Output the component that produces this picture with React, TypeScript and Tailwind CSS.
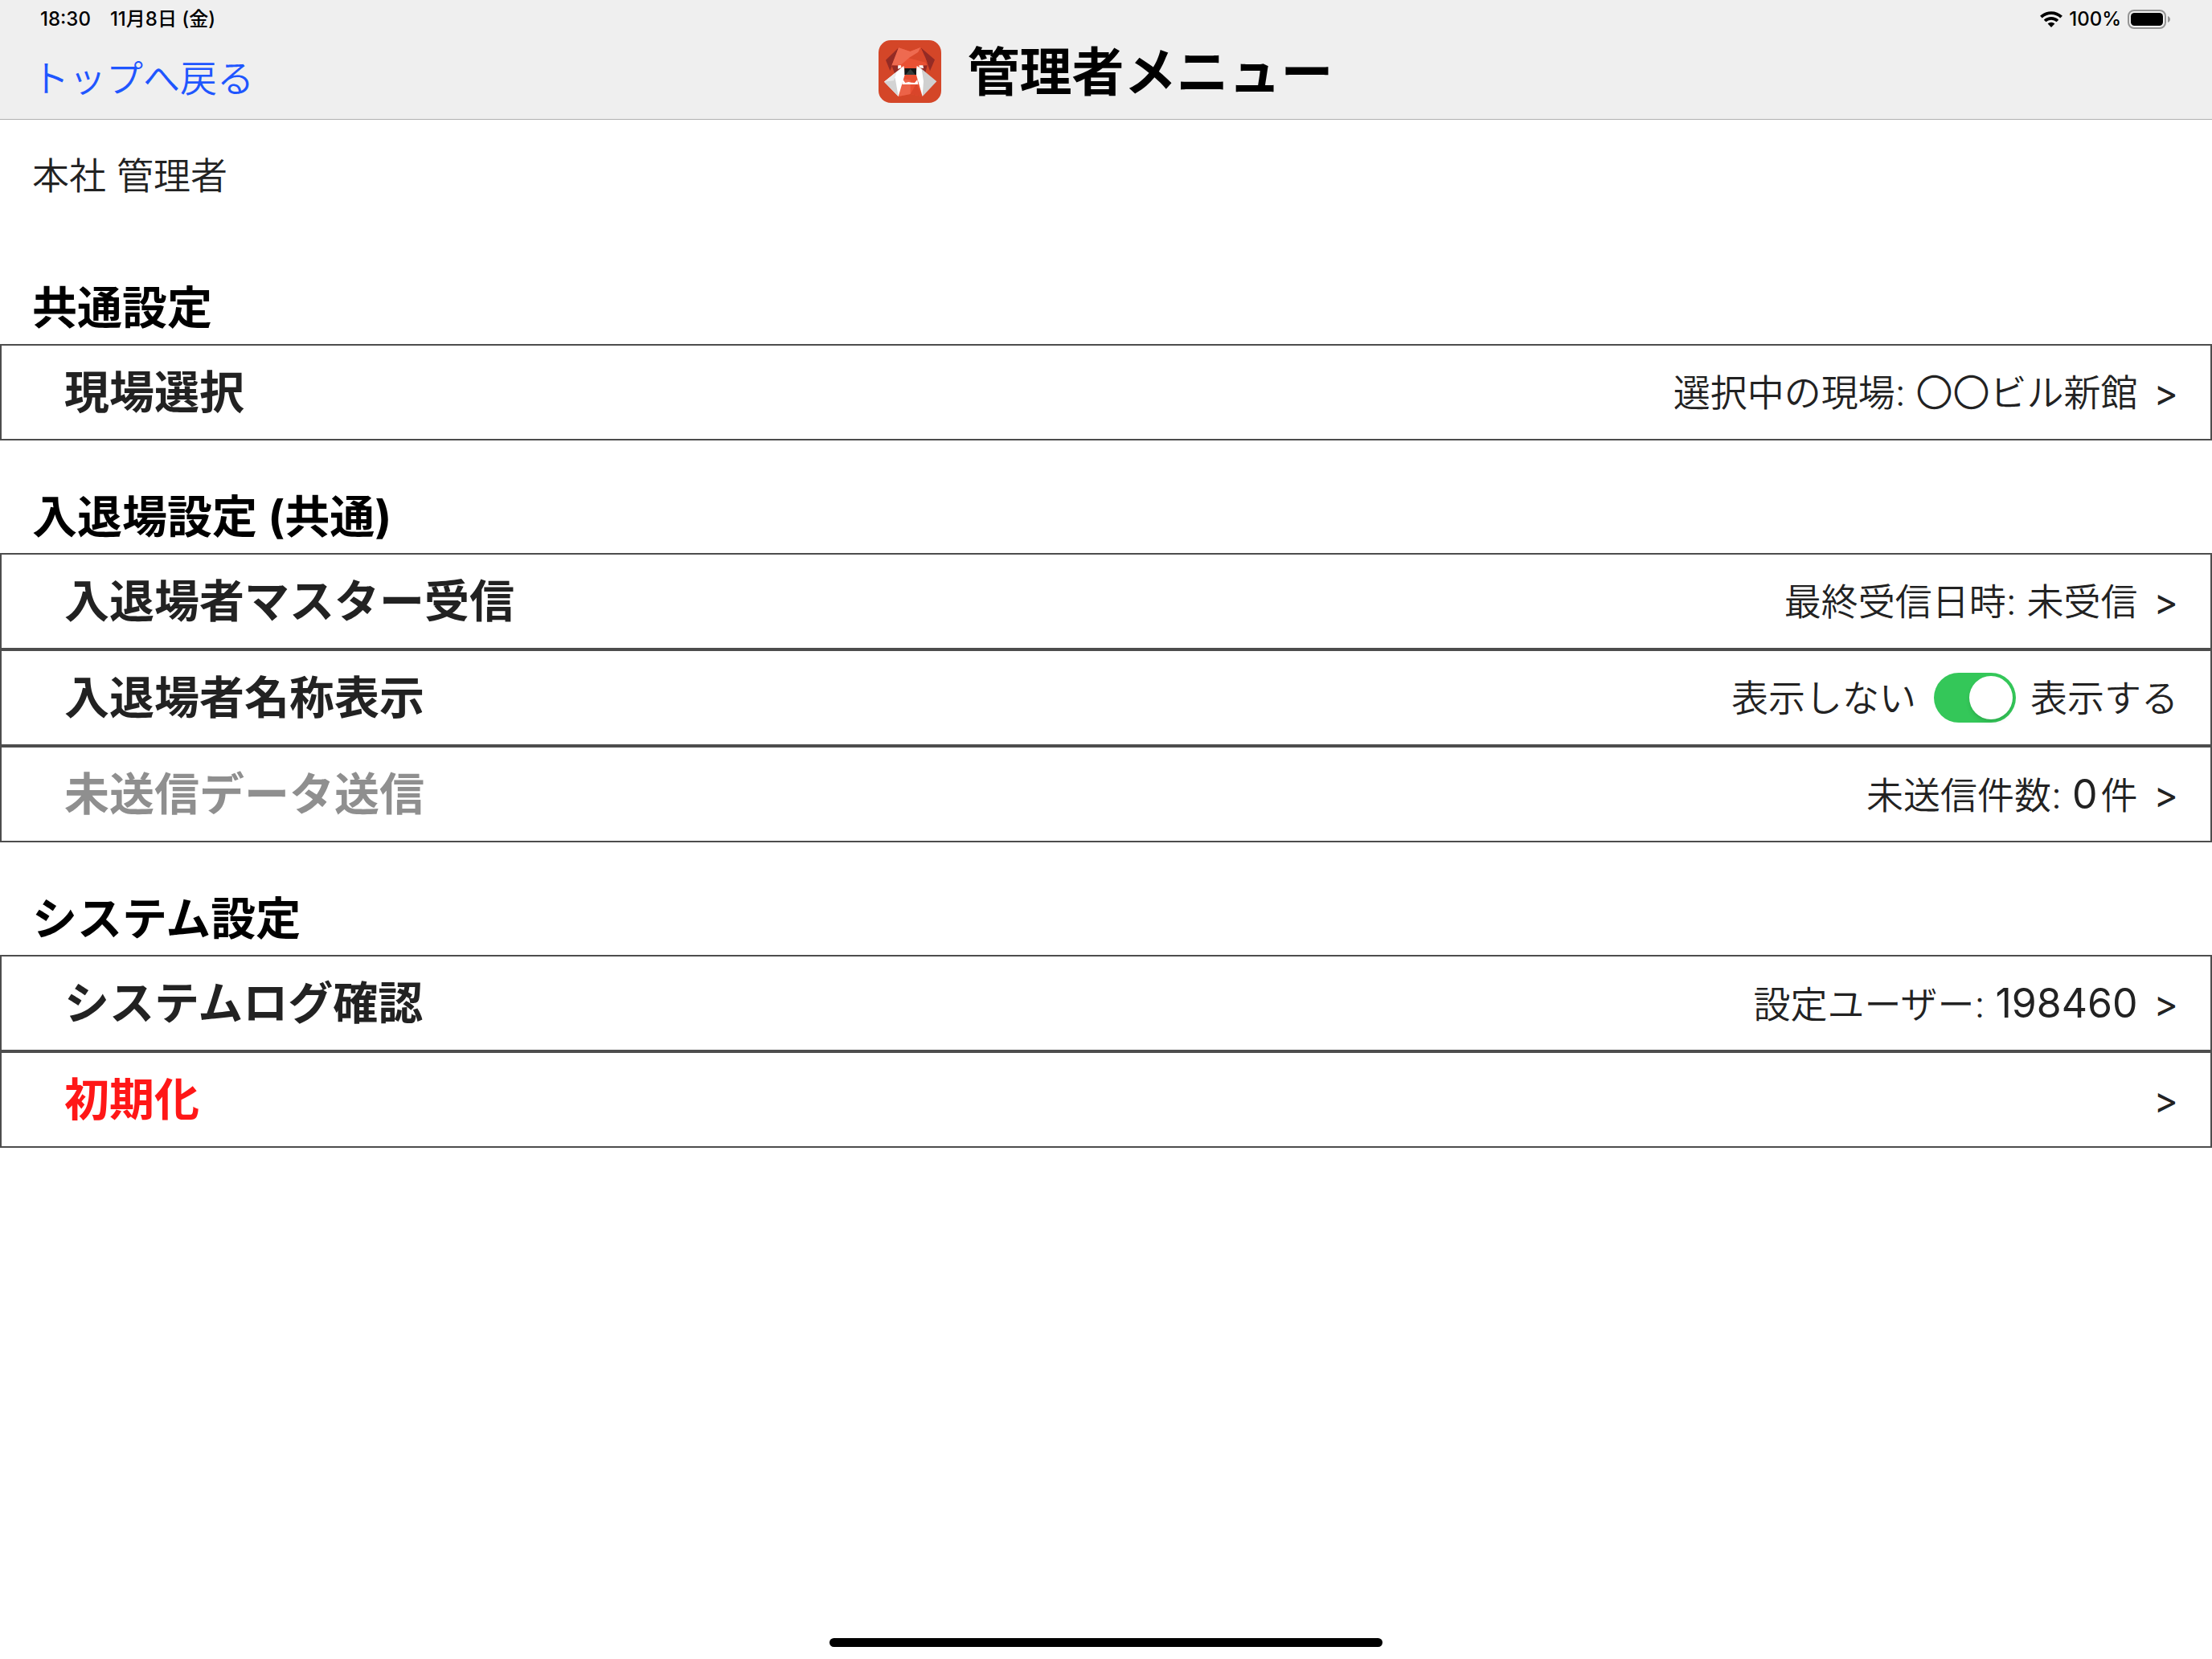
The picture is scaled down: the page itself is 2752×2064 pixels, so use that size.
import { useState, type ReactNode } from "react";

function AppIcon() {
  return (
    <svg viewBox="39 27 234 234" className="size-[78px] shrink-0" aria-hidden="true">
      <rect x="39" y="27" width="234" height="234" rx="46" fill="#d44628" />
      <path d="M114 55 66 101 82 141 104 88Z" fill="#942b25" />
      <path d="M196 54 249 100 231 142 214 92Z" fill="#942b25" />
      <path d="M114 55 157 69 196 54 220 122 190 150H125L88 122Z" fill="#e95134" />
      <path d="M114 55 157 69 196 54 187 72 152 94 124 118 88 122Z" fill="#ee6a50" />
      <path d="M196 54 221 112 152 94 187 72Z" fill="#d9482b" />
      <path d="M88 121 113 122 126 134 100 154Z" fill="#942b25" />
      <path d="M221 121 197 122 187 134 214 148Z" fill="#942b25" />
      <path d="M122 130 190 130 203 237 158 228 113 237Z" fill="#e94f32" />
      <path d="M128 170 158 176V228L113 237Z" fill="#ec6348" />
      <path d="M180 190 158 228 203 237Z" fill="#d9452a" />
      <path d="M112 121H123L124 130 111 134Z" fill="#fff" />
      <path d="M190 121H205L207 132 192 130Z" fill="#fff" />
      <path d="M133 123 60 182 113 237 138 152Z" fill="#fff" />
      <path d="M60 182 101 168 113 237Z" fill="#d3d3d3" />
      <path d="M60 182 108 144 96 178Z" fill="#e9e9e9" />
      <path d="M182 123 200 134 214 172 203 237 179 153Z" fill="#fff" />
      <path d="M200 134 256 181 203 237 207 180Z" fill="#d0d0d0" />
      <path d="M136 132H180V156H136Z" fill="#111617" />
      <path d="M158 134 176 156H140Z" fill="#343d3c" />
      <path d="M127 192 130 174 139 186 151 183 162 185 174 186 184 174 187 192Z" fill="#fff" />
    </svg>
  );
}

function WifiIcon() {
  return (
    <svg viewBox="0 0 28 20" className="h-5 w-7" aria-hidden="true">
      <g fill="none" stroke="#000" strokeWidth="3.8">
        <path d="M1.4 7.2a18 18 0 0 1 25.2 0" />
        <path d="M6.1 12a11.3 11.3 0 0 1 15.8 0" />
      </g>
      <path d="M9.6 15.6a6.3 6.3 0 0 1 8.8 0L14 20Z" fill="#000" />
    </svg>
  );
}

function BatteryIcon() {
  return (
    <svg viewBox="0 0 54 24" className="h-6 w-[54px]" aria-hidden="true">
      <rect x="1" y="1" width="46" height="22" rx="7" fill="none" stroke="#949494" strokeWidth="2" />
      <rect x="4" y="4" width="40" height="16" rx="4.5" fill="#000" />
      <path d="M50 8c4 1.600 4 6.400 0 8Z" fill="#949494" />
    </svg>
  );
}

function Section({ title, children }: { title: string; children: ReactNode }) {
  return (
    <section className="mb-12">
      <h2 className="flex h-[92px] items-center px-10 pt-0.5 text-[56px] leading-none font-bold text-black">
        {title}
      </h2>
      <div>{children}</div>
    </section>
  );
}

const rowClass =
  "flex h-[120px] w-full items-center justify-between border-2 border-[#4d4d4d] pr-10 pl-[78px] text-left text-[#222222]";

function Row({
  label,
  labelClass = "",
  disabled = false,
  children,
}: {
  label: string;
  labelClass?: string;
  disabled?: boolean;
  children?: ReactNode;
}) {
  return (
    <button type="button" disabled={disabled} className={rowClass}>
      <span className={`text-[56px] leading-none font-bold ${labelClass}`}>{label}</span>
      <span className="flex items-center gap-5 text-[46px] leading-none font-[350]">
        <span>{children}</span>
        <span className="font-normal">&gt;</span>
      </span>
    </button>
  );
}

export default function App() {
  const [showNames, setShowNames] = useState(true);

  return (
    <div
      lang="ja"
      className="flex min-h-screen flex-col bg-white font-['Inter','Noto_Sans_CJK_JP',sans-serif] text-[#222222]"
    >
      <header className="border-b border-[#b0b0b0] bg-[#efefef]">
        <div className="flex h-12 items-center justify-between pr-[51px] pl-[50px] text-2xl leading-none font-medium text-black">
          <div className="flex gap-6">
            <span>18:30</span>
            <span>11月8日 (金)</span>
          </div>
          <div className="flex items-center gap-2">
            <WifiIcon />
            <span>100%</span>
            <BatteryIcon />
          </div>
        </div>
        <div className="grid h-[100px] grid-cols-[1fr_auto_1fr] items-start px-10">
          <a href="#top" className="mt-[26px] text-[46px] leading-none font-[350] text-[#1f56ff]">
            トップへ戻る
          </a>
          <h1 className="flex items-center gap-8 text-[65px] leading-[80px] font-bold text-black">
            <AppIcon />
            <span className="pt-0.5">管理者メニュー</span>
          </h1>
        </div>
      </header>

      <main>
        <p className="flex h-[187px] items-start px-10 pt-[46px] text-[46px] leading-none font-[350]">本社 管理者</p>

        <Section title="共通設定">
          <Row label="現場選択">選択中の現場: 〇〇ビル新館</Row>
        </Section>

        <Section title="入退場設定 (共通)">
          <Row label="入退場者マスター受信">最終受信日時: 未受信</Row>
          <div className={rowClass}>
            <span id="names-label" className="text-[56px] leading-none font-bold">
              入退場者名称表示
            </span>
            <label className="flex items-center text-[46px] leading-none font-[350]">
              表示しない
              <input
                type="checkbox"
                role="switch"
                aria-labelledby="names-label"
                checked={showNames}
                onChange={(e) => setShowNames(e.target.checked)}
                className="mr-[18px] ml-[22px] flex h-[62px] w-[102px] appearance-none items-center rounded-full bg-[#d1d1d6] px-1 before:size-[54px] before:rounded-full before:bg-white before:shadow-md checked:justify-end checked:bg-[#34c759]"
              />
              表示する
            </label>
          </div>
          <Row label="未送信データ送信" labelClass="text-[#8f8f8f]" disabled>
            未送信件数: <span className="mr-1 text-[50px] font-normal">0</span>件
          </Row>
        </Section>

        <Section title="システム設定">
          <Row label="システムログ確認">
            設定ユーザー: <span className="text-[50px] font-normal">198460</span>
          </Row>
          <Row label="初期化" labelClass="text-[#ff1717]" />
        </Section>
      </main>

      <div className="mx-auto mt-auto mb-[15px] h-[11px] w-1/4 rounded-full bg-black" />
    </div>
  );
}
